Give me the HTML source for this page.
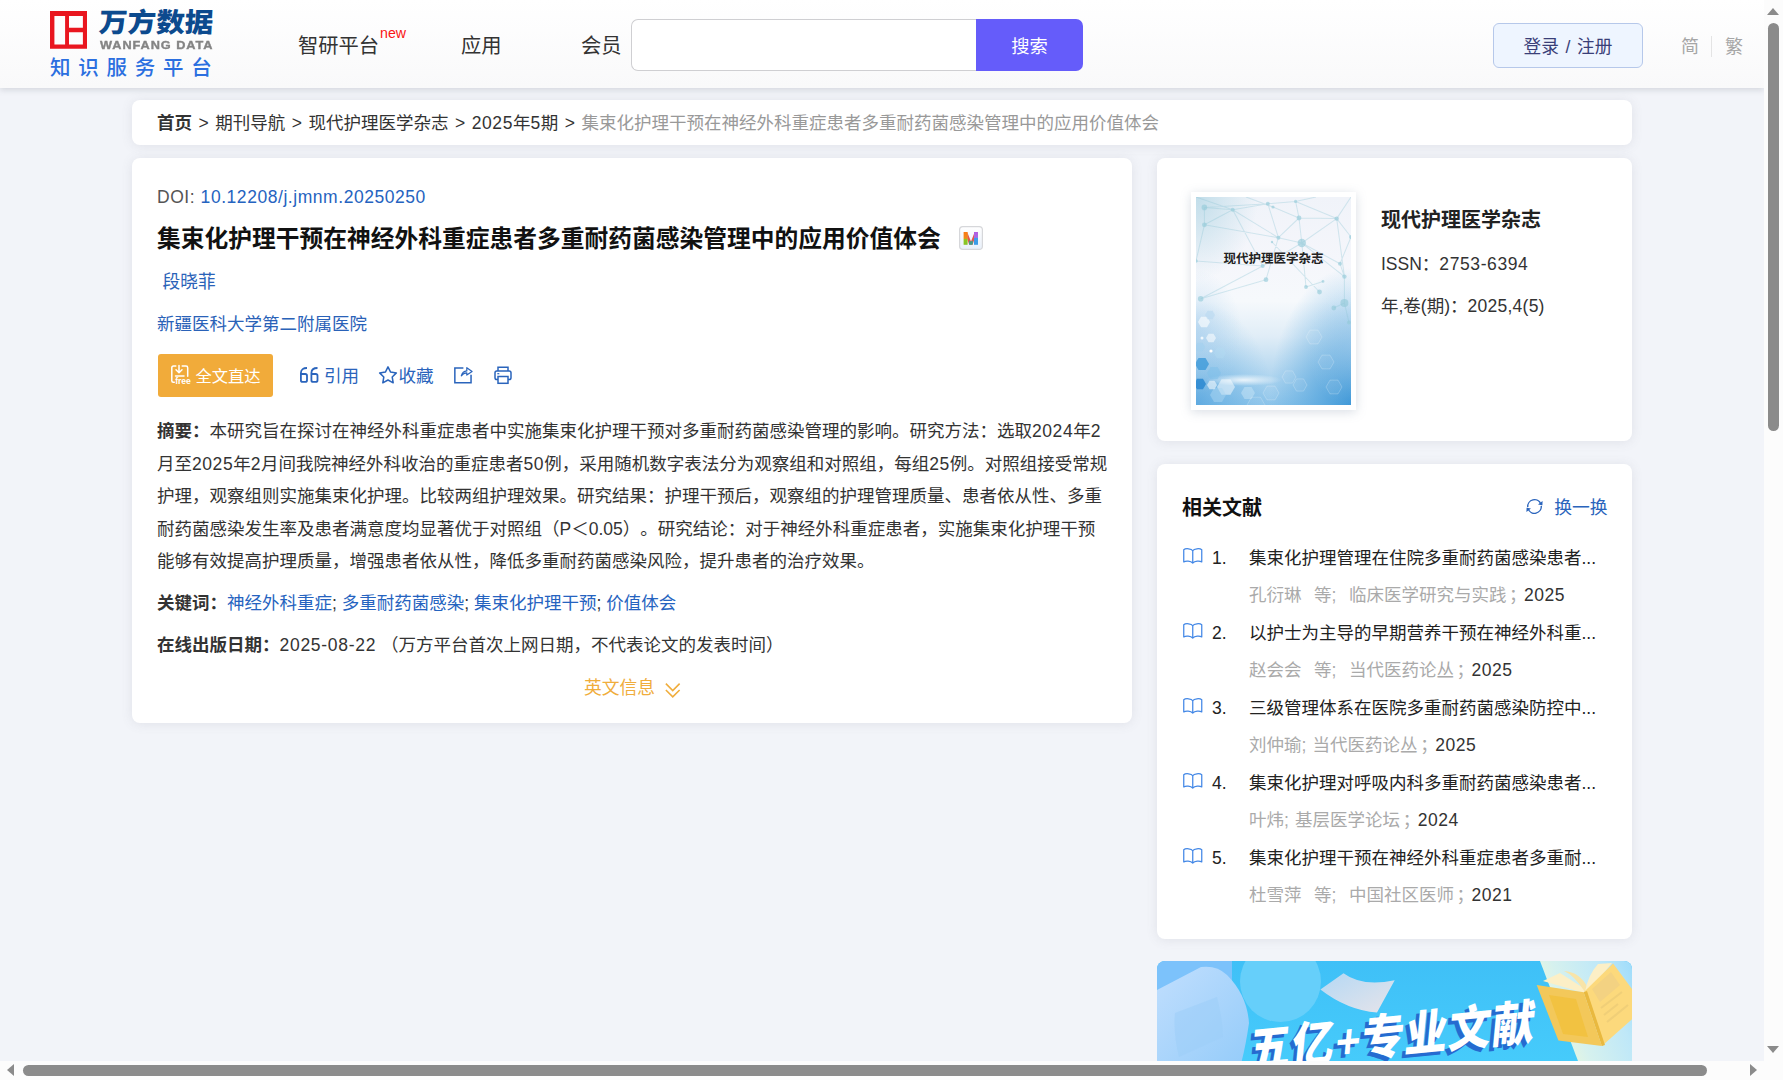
<!DOCTYPE html>
<html lang="zh-CN">
<head>
<meta charset="utf-8">
<title>集束化护理干预在神经外科重症患者多重耐药菌感染管理中的应用价值体会</title>
<style>
*{box-sizing:border-box;margin:0;padding:0}
html,body{width:1783px;height:1080px;overflow:hidden}
body{position:relative;background:#f2f4f9;font-family:"Liberation Sans","Noto Sans CJK SC",sans-serif;color:#2b2b2b;font-size:17.5px;text-spacing-trim:space-all}
.abs{position:absolute;white-space:nowrap}
a{text-decoration:none;color:inherit}
/* header */
#hdr{position:absolute;left:0;top:0;width:1764px;height:88px;background:linear-gradient(#ffffff,#f9f9fa);box-shadow:0 2px 6px rgba(90,95,112,.2)}
.nav{position:absolute;top:31.700px;font-size:20.3px;line-height:28px;color:#333;white-space:nowrap}
#sbox{position:absolute;left:631px;top:19px;width:346px;height:52px;background:#fff;border:1px solid #cfcfd2;border-right:none;border-radius:7px 0 0 7px}
#sbtn{position:absolute;left:976px;top:19px;width:107px;height:52px;background:#655cfa;border-radius:0 7px 7px 0;color:#fff;font-size:18.3px;line-height:55px;text-align:center}
#login{position:absolute;left:1493px;top:23px;width:150px;height:45px;background:#eef5ff;border:1px solid #b6c8ea;border-radius:6px;color:#3a3f78;font-size:17.7px;line-height:47px;text-align:center;white-space:nowrap;word-spacing:1.7px}
.lang{position:absolute;top:33.700px;font-size:18px;line-height:26px;color:#a6a6a6}
/* cards */
.card{position:absolute;background:#fff;border-radius:8px;box-shadow:0 1px 12px rgba(95,100,118,.12)}
#crumb{left:132px;top:100px;width:1500px;height:45px}
#main{left:132px;top:158px;width:1000px;height:565px}
#jcard{left:1157px;top:158px;width:475px;height:283px}
#rcard{left:1157px;top:464px;width:475px;height:475px}
.blue{color:#2563c0}
.ra{word-spacing:1.4px}
.ln{position:absolute;left:157px;white-space:nowrap;font-size:17.5px;line-height:32px;color:#333}
b,.b{font-weight:700}
.n{font-style:normal;letter-spacing:.57px}
/* scrollbars */
#vsb{position:absolute;left:1764px;top:0;width:19px;height:1061px;background:#fcfcfc}
#hsb{position:absolute;left:0;top:1061px;width:1783px;height:19px;background:#fcfcfc}
.thumb{position:absolute;background:#8b8b8b;border-radius:6px}
.tri{position:absolute;width:0;height:0;border-style:solid}
</style>
</head>
<body>

<!-- breadcrumb -->
<div class="card" id="crumb"></div>
<div class="abs" id="crumbtxt" style="left:157px;top:109px;font-size:17.5px;line-height:28px;color:#333;word-spacing:1.65px"><b>首页</b> &gt; 期刊导航 &gt; 现代护理医学杂志 &gt; <i class="n">2025</i>年<i class="n">5</i>期 &gt; <span id="crl" style="color:#999">集束化护理干预在神经外科重症患者多重耐药菌感染管理中的应用价值体会</span></div>

<!-- main card -->
<div class="card" id="main"></div>
<div class="abs" id="doi" style="left:157px;top:183px;font-size:17.5px;line-height:28px;color:#555;letter-spacing:.55px">DOI: <span class="blue">10.12208/j.jmnm.20250250</span></div>
<div class="abs b" id="title" style="left:157px;top:220.800px;font-size:23.75px;line-height:36px;color:#111">集束化护理干预在神经外科重症患者多重耐药菌感染管理中的应用价值体会</div>
<svg id="micon" style="position:absolute;left:959px;top:226px" width="24" height="24" viewBox="0 0 24 24">
  <defs><linearGradient id="mg0" x1="0" y1="0" x2="0" y2="1"><stop offset="0" stop-color="#fff"/><stop offset="1" stop-color="#e9f0fa"/></linearGradient>
  <linearGradient id="mg1" x1="0" y1="0" x2="0" y2="1"><stop offset="0" stop-color="#fa7a12"/><stop offset=".5" stop-color="#f08a1a"/><stop offset=".56" stop-color="#8cc820"/><stop offset="1" stop-color="#86c226"/></linearGradient>
  <linearGradient id="mg2" x1="0" y1="0" x2="0" y2="1"><stop offset="0" stop-color="#b45be0"/><stop offset=".42" stop-color="#a46be6"/><stop offset=".5" stop-color="#3e9ae8"/><stop offset="1" stop-color="#3a9be6"/></linearGradient></defs>
  <rect x=".6" y=".6" width="22.800" height="22.800" rx="3.200" fill="url(#mg0)" stroke="#d6d7da" stroke-width="1.200"/>
  <path d="M8.200 6L12 15.500L15.500 6.500L15.500 13L13.600 18.700H10.200L8.200 13z" fill="#e2574c"/>
  <path d="M10 14.500L12 15.500L14 14.500L13.600 18.700H10.200z" fill="#3f9e8c"/>
  <rect x="4.600" y="6" width="4" height="12.800" fill="url(#mg1)"/>
  <rect x="15" y="6" width="4" height="12.800" fill="url(#mg2)"/>
</svg>
<div class="abs" id="author" style="left:162.500px;top:267.800px;font-size:17.7px;line-height:28px;color:#2a62b8">段晓菲</div>
<div class="abs" id="affil" style="left:157px;top:309.700px;font-size:17.5px;line-height:28px;color:#2a62b8">新疆医科大学第二附属医院</div>

<div id="fbtn" style="position:absolute;left:158px;top:354px;width:115px;height:43px;background:#f1ab3a;border-radius:3px"></div>
<svg style="position:absolute;left:169px;top:363px" width="24" height="24" viewBox="0 0 24 24" fill="none" stroke="#fff" stroke-width="1.5" stroke-linecap="round" stroke-linejoin="round">
  <path d="M6.800 3H4.500Q2.800 3 2.800 4.700V17.800Q2.800 19.300 4.300 19.300H5.300"/><path d="M13.200 3H17Q18.700 3 18.700 4.700V13.200"/><path d="M10 2.400V9.600M7 6.800L10 9.800L13 6.800"/><path d="M6.500 13H15"/>
  <text x="6.300" y="20.800" font-family="Liberation Sans,sans-serif" font-size="8.600" font-weight="700" fill="#fff" stroke="none" letter-spacing="-.1">free</text>
</svg>
<div class="abs" id="fbtxt" style="left:195.500px;top:361.800px;font-size:16.3px;line-height:28px;color:#fff">全文直达</div>

<svg id="cite66" style="position:absolute;left:299px;top:366px" width="21" height="18" viewBox="0 0 21 18" fill="none" stroke="#2a64bc" stroke-width="1.800"><path d="M8 2C4.500 2 1.900 3.300 1.900 7V14.200Q1.900 15.900 3.600 15.900H6.300Q8 15.900 8 14.200V9.700Q8 8 6.300 8H1.900"/><path d="M18.500 2C15 2 12.400 3.300 12.400 7V14.200Q12.400 15.900 14.100 15.900H16.800Q18.500 15.900 18.500 14.200V9.700Q18.500 8 16.800 8H12.400"/></svg>
<div class="abs" id="cite" style="left:324px;top:361.800px;font-size:17.6px;line-height:28px;color:#2a64bc">引用</div>
<svg style="position:absolute;left:378.300px;top:365.400px" width="20" height="20" viewBox="0 0 20 20" fill="none" stroke="#2a64bc" stroke-width="1.5" stroke-linejoin="round"><path d="M10 1.800l2.600 5.300 5.800.8-4.200 4.100 1 5.800-5.200-2.800-5.200 2.800 1-5.800L1.600 7.900l5.800-.8z"/></svg>
<div class="abs" id="fav" style="left:398.500px;top:362px;font-size:17.6px;line-height:28px;color:#2a64bc">收藏</div>
<svg style="position:absolute;left:453px;top:364px" width="21" height="21" viewBox="0 0 21 21" fill="none" stroke="#2a64bc" stroke-width="1.500"><path d="M10.400 3.950H1.850V18.850H18.050V10.800"/><path d="M8.300 11.800c.8-3 2.700-4.700 5.500-4.900V3.700l5.300 3.700-5.300 3.700V8.800c-2.300.1-4.100 1-5.500 3z" stroke-width="1.200" stroke-linejoin="round"/></svg>
<svg style="position:absolute;left:493px;top:365px" width="20" height="20" viewBox="0 0 20 20" fill="none" stroke="#2a64bc" stroke-width="1.500"><path d="M5 6V2.200h10V6"/><rect x="2" y="6" width="16" height="8.600" rx="1.800"/><rect x="5" y="11.500" width="10" height="6.800" fill="#fff"/><path d="M4.300 8.700h2" stroke-width="1.200"/></svg>

<div class="ln" id="l1" style="top:415px"><b>摘要：</b>本研究旨在探讨在神经外科重症患者中实施集束化护理干预对多重耐药菌感染管理的影响。研究方法：选取<i class="n">2024</i>年<i class="n">2</i></div>
<div class="ln" id="l2" style="top:447.500px">月至<i class="n">2025</i>年<i class="n">2</i>月间我院神经外科收治的重症患者<i class="n">50</i>例，采用随机数字表法分为观察组和对照组，每组<i class="n">25</i>例。对照组接受常规</div>
<div class="ln" id="l3" style="top:480px">护理，观察组则实施集束化护理。比较两组护理效果。研究结果：护理干预后，观察组的护理管理质量、患者依从性、多重</div>
<div class="ln" id="l4" style="top:512.500px">耐药菌感染发生率及患者满意度均显著优于对照组（P＜0.05）。研究结论：对于神经外科重症患者，实施集束化护理干预</div>
<div class="ln" id="l5" style="top:545px">能够有效提高护理质量，增强患者依从性，降低多重耐药菌感染风险，提升患者的治疗效果。</div>
<div class="ln" id="kw" style="top:586.500px"><b>关键词：</b><span class="blue">神经外科重症</span>; <span class="blue">多重耐药菌感染</span>; <span class="blue">集束化护理干预</span>; <span class="blue">价值体会</span></div>
<div class="ln" id="dt" style="top:628.700px"><b>在线出版日期：</b><i class="n" style="letter-spacing:.72px">2025-08-22</i> （万方平台首次上网日期，不代表论文的发表时间）</div>
<div class="abs" id="eng" style="left:584px;top:674px;font-size:17.8px;line-height:28px;color:#f0ad3c">英文信息</div>
<svg style="position:absolute;left:663.500px;top:680.500px" width="17.500" height="18" viewBox="0 0 16 17" fill="none" stroke="#f0ad3c" stroke-width="1.5"><path d="M1.500 2.500L8 9l6.500-6.500"/><path d="M1.500 8.500L8 15l6.500-6.500"/></svg>

<!-- journal card -->
<div class="card" id="jcard"></div>
<div style="position:absolute;left:1191px;top:192px;width:165px;height:218px;background:#fff;box-shadow:0 2px 10px rgba(120,135,160,.28)"></div>
<svg id="cover" style="position:absolute;left:1196px;top:197px" width="155" height="208" viewBox="0 0 155 208">
<defs>
<linearGradient id="cg1" x1="0" y1="0" x2="0" y2="1"><stop offset="0" stop-color="#f0f3f9"/><stop offset=".3" stop-color="#f5f6fb"/><stop offset=".5" stop-color="#f6f9fc"/><stop offset=".67" stop-color="#e0edf7"/><stop offset=".84" stop-color="#b6d8f0"/><stop offset="1" stop-color="#8cc4ea"/></linearGradient>
<radialGradient id="cg3" cx="1" cy="1" r=".66" gradientTransform="translate(1 1) scale(.8 1) translate(-1 -1)"><stop offset="0" stop-color="#3a95d6" stop-opacity=".95"/><stop offset=".45" stop-color="#4fa2dc" stop-opacity=".6"/><stop offset="1" stop-color="#5aaae0" stop-opacity="0"/></radialGradient>
<radialGradient id="cg4" cx="0" cy="1" r=".5"><stop offset="0" stop-color="#4c9fdc" stop-opacity=".7"/><stop offset="1" stop-color="#6ab4e4" stop-opacity="0"/></radialGradient>
<radialGradient id="cg6" cx="0" cy="0" r=".4"><stop offset="0" stop-color="#b5d8e6" stop-opacity=".8"/><stop offset="1" stop-color="#b5d8e6" stop-opacity="0"/></radialGradient>
<filter id="cbl" x="-5%" y="-5%" width="110%" height="110%"><feGaussianBlur stdDeviation=".35"/></filter>
<radialGradient id="cg9" cx=".5" cy=".5" r=".5"><stop offset="0" stop-color="#a9cfee" stop-opacity=".6"/><stop offset="1" stop-color="#b4d6ef" stop-opacity="0"/></radialGradient>
<radialGradient id="cg5" cx=".5" cy=".5" r=".5"><stop offset="0" stop-color="#fff" stop-opacity="1"/><stop offset="1" stop-color="#fff" stop-opacity="0"/></radialGradient>
</defs>
<rect width="155" height="208" fill="url(#cg1)"/>
<rect width="155" height="208" fill="url(#cg3)"/>
<rect width="155" height="208" fill="url(#cg4)"/>
<rect width="155" height="208" fill="url(#cg6)"/>
<ellipse cx="0" cy="135" rx="46" ry="62" fill="url(#cg9)"/><ellipse cx="155" cy="150" rx="44" ry="60" fill="url(#cg9)" opacity=".6"/>
<ellipse cx="48" cy="183" rx="38" ry="6" fill="url(#cg5)" opacity=".8"/>
<path d="M8.4 10.4L36.7 12.7M36.7 12.7L71.8 6.7M36.7 12.7L82.4 40.7M8.4 27.8L36.7 12.7M8.4 27.8L82.4 40.7M71.8 6.7L82.4 40.7M77 10L103 21M103 21L82.4 40.7M103 21L140.7 21.6M99.6 4.4L103 21M105.8 46L140.7 21.6M82.4 40.7L105.8 46M4.7 101.8L66.7 69M66.7 69L105.8 46M36.7 12.7L66.7 69M105.8 46L110 90M110 90L127 84.4M140.7 21.6L148.4 79.6M8.4 10.4L8.4 27.8M8.4 10.4L71.8 6.7M77 10L50 0M99.6 4.4L120 0M140.7 21.6L155 0M140.7 21.6L155 40M155 40L144 66.7M144 66.7L148.4 79.6M148.4 79.6L148.4 106M148.4 106L137.8 111M105.8 46L148.4 79.6M0 64L66.7 69M0 64L8.4 27.8M70 82.7L82.4 40.7M105.8 46L144 66.7M103 21L105.8 46M123.5 95L76 45M36.7 12.7L0 0M71.8 6.7L99.6 4.4M99.6 4.4L140.7 21.6M148.4 106L153 125.6M4.7 101.8L70 82.7" stroke="#8cc3d2" stroke-opacity=".34" stroke-width="1.05" filter="url(#cbl)" fill="none"/>
<circle cx="8.4" cy="10.4" r="2.8" fill="#93cad8" fill-opacity=".62"/>
<circle cx="8.4" cy="27.8" r="2.4" fill="#93cad8" fill-opacity=".62"/>
<circle cx="36.7" cy="12.7" r="2" fill="#93cad8" fill-opacity=".62"/>
<circle cx="71.8" cy="6.7" r="2" fill="#93cad8" fill-opacity=".62"/>
<circle cx="77" cy="10" r="1.6" fill="#93cad8" fill-opacity=".62"/>
<circle cx="99.6" cy="4.4" r="1.6" fill="#93cad8" fill-opacity=".62"/>
<circle cx="103" cy="21" r="2.4" fill="#93cad8" fill-opacity=".62"/>
<circle cx="140.7" cy="21.6" r="2.2" fill="#93cad8" fill-opacity=".62"/>
<circle cx="82.4" cy="40.7" r="2" fill="#93cad8" fill-opacity=".62"/>
<circle cx="105.8" cy="46" r="4.2" fill="#93cad8" fill-opacity=".62"/>
<circle cx="76" cy="45" r="1.2" fill="#93cad8" fill-opacity=".62"/>
<circle cx="70" cy="82.7" r="2.4" fill="#93cad8" fill-opacity=".62"/>
<circle cx="66.7" cy="69" r="2" fill="#93cad8" fill-opacity=".62"/>
<circle cx="110" cy="90" r="1.9" fill="#93cad8" fill-opacity=".62"/>
<circle cx="123.5" cy="95" r="2.4" fill="#93cad8" fill-opacity=".62"/>
<circle cx="127" cy="84.4" r="1.4" fill="#93cad8" fill-opacity=".62"/>
<circle cx="148.4" cy="79.6" r="2.2" fill="#93cad8" fill-opacity=".62"/>
<circle cx="148.4" cy="106" r="4" fill="#93cad8" fill-opacity=".62"/>
<circle cx="137.8" cy="111" r="2.4" fill="#93cad8" fill-opacity=".62"/>
<circle cx="4.7" cy="101.8" r="2.8" fill="#93cad8" fill-opacity=".62"/>
<circle cx="153" cy="125.6" r="2" fill="#93cad8" fill-opacity=".62"/>
<circle cx="144" cy="66.7" r="2" fill="#93cad8" fill-opacity=".62"/>
<circle cx="0" cy="64" r="1.8" fill="#93cad8" fill-opacity=".62"/>
<circle cx="155" cy="40" r="2" fill="#93cad8" fill-opacity=".62"/>
<polygon points="13.0,167.0 9.5,173.1 2.5,173.1 -1.0,167.0 2.5,160.9 9.5,160.9" fill="#3d9ad9" fill-opacity="0.8"/>
<polygon points="10.0,187.0 7.0,192.2 1.0,192.2 -2.0,187.0 1.0,181.8 7.0,181.8" fill="#2f8bd2" fill-opacity="0.9"/>
<polygon points="25.0,176.0 21.5,182.1 14.5,182.1 11.0,176.0 14.5,169.9 21.5,169.9" fill="#7ec0ea" fill-opacity="0.5"/>
<polygon points="14.0,125.0 11.0,130.2 5.0,130.2 2.0,125.0 5.0,119.8 11.0,119.8" fill="#fff" fill-opacity="0.6"/>
<polygon points="19.0,118.0 16.5,122.3 11.5,122.3 9.0,118.0 11.5,113.7 16.5,113.7" fill="#b9d9f0" fill-opacity="0.6"/>
<polygon points="39.0,190.0 34.5,197.8 25.5,197.8 21.0,190.0 25.5,182.2 34.5,182.2" fill="#fff" fill-opacity="0.5"/>
<polygon points="30.0,198.0 26.0,204.9 18.0,204.9 14.0,198.0 18.0,191.1 26.0,191.1" fill="#a9d5f2" fill-opacity="0.5"/>
<polygon points="20.0,141.0 17.5,145.3 12.5,145.3 10.0,141.0 12.5,136.7 17.5,136.7" fill="#fff" fill-opacity="0.55"/>
<polygon points="9.0,150.0 6.5,154.3 1.5,154.3 -1.0,150.0 1.5,145.7 6.5,145.7" fill="#9fd0ef" fill-opacity="0.5"/>
<polygon points="30.0,156.0 27.0,161.2 21.0,161.2 18.0,156.0 21.0,150.8 27.0,150.8" fill="#b5dbf3" fill-opacity="0.4"/>
<polygon points="59.0,196.0 55.5,202.1 48.5,202.1 45.0,196.0 48.5,189.9 55.5,189.9" fill="#cfe8f8" fill-opacity="0.45"/>
<polygon points="21.0,188.0 18.5,192.3 13.5,192.3 11.0,188.0 13.5,183.7 18.5,183.7" fill="#fff" fill-opacity="0.55"/>
<polygon points="83.0,196.0 79.0,202.9 71.0,202.9 67.0,196.0 71.0,189.1 79.0,189.1" fill="#fff" fill-opacity=".06" stroke="#ffffff" stroke-opacity=".3" stroke-width=".7"/>
<polygon points="100.0,180.0 96.5,186.1 89.5,186.1 86.0,180.0 89.5,173.9 96.5,173.9" fill="#fff" fill-opacity=".06" stroke="#ffffff" stroke-opacity=".3" stroke-width=".7"/>
<polygon points="111.0,188.0 107.5,194.1 100.5,194.1 97.0,188.0 100.5,181.9 107.5,181.9" fill="#fff" fill-opacity=".06" stroke="#ffffff" stroke-opacity=".3" stroke-width=".7"/>
<polygon points="138.0,165.0 134.0,171.9 126.0,171.9 122.0,165.0 126.0,158.1 134.0,158.1" fill="#fff" fill-opacity=".06" stroke="#ffffff" stroke-opacity=".3" stroke-width=".7"/>
<polygon points="146.0,190.0 142.0,196.9 134.0,196.9 130.0,190.0 134.0,183.1 142.0,183.1" fill="#fff" fill-opacity=".06" stroke="#ffffff" stroke-opacity=".3" stroke-width=".7"/>
<polygon points="69.0,208.0 64.5,215.8 55.5,215.8 51.0,208.0 55.5,200.2 64.5,200.2" fill="#fff" fill-opacity=".06" stroke="#ffffff" stroke-opacity=".3" stroke-width=".7"/>
<polygon points="126.0,140.0 122.0,146.9 114.0,146.9 110.0,140.0 114.0,133.1 122.0,133.1" fill="#fff" fill-opacity=".06" stroke="#ffffff" stroke-opacity=".3" stroke-width=".7"/>
<circle cx="15" cy="154" r="1.6" fill="#fff"/><circle cx="6" cy="141" r="1.5" fill="#fff" opacity=".8"/>
<text x="77.500" y="65.500" text-anchor="middle" font-family="Liberation Sans,Noto Sans CJK SC,sans-serif" font-weight="700" font-size="12.500" fill="#222">现代护理医学杂志</text>
</svg>
<div class="abs b" id="jname" style="left:1381px;top:204.400px;font-size:20px;line-height:32px;color:#222">现代护理医学杂志</div>
<div class="abs" id="issn" style="left:1381px;top:249.500px;font-size:17.5px;line-height:28px;color:#333">ISSN：<i class="n" style="letter-spacing:.6px">2753-6394</i></div>
<div class="abs" id="yvi" style="left:1381px;top:291.800px;font-size:17.5px;line-height:28px;color:#333">年,卷(期)：<i class="n" style="letter-spacing:.25px">2025,4(5)</i></div>

<!-- related card -->
<div class="card" id="rcard"></div>
<div class="abs b" id="rtitle" style="left:1182px;top:492px;font-size:20px;line-height:32px;color:#111">相关文献</div>
<svg style="position:absolute;left:1524.800px;top:496.800px" width="19" height="19" viewBox="0 0 19 19" fill="none" stroke="#2a64bc" stroke-width="1.400"><g><path d="M2.73 10.09A6.8 6.8 0 0 1 15.80 6.95"/><path d="M17.60 3.90L17.40 8.30L13.00 7.60z" fill="#2a64bc" stroke="none"/></g><g transform="rotate(180 9.5 9.5)"><path d="M2.73 10.09A6.8 6.8 0 0 1 15.80 6.95"/><path d="M17.60 3.90L17.40 8.30L13.00 7.60z" fill="#2a64bc" stroke="none"/></g></svg>
<div class="abs" id="swap" style="left:1554.200px;top:494.200px;font-size:17.8px;line-height:28px;color:#2a64bc">换一换</div>
<svg class="bk" style="position:absolute;left:1181.700px;top:547px" width="21.500" height="18" viewBox="0 0 21 18" fill="none" stroke="#4287e6" stroke-width="1.250" stroke-linejoin="round"><path d="M10.500 3.700C9.300 1.600 3.500 1 1.500 2.700V14.900C3.500 13.500 8.500 13.700 10.500 16.100C12.500 13.700 17.500 13.500 19.500 14.900V2.700C17.500 1 11.700 1.600 10.500 3.700zM10.500 3.700V16"/></svg>
<div class="abs rn" style="left:1212px;top:543.7px;font-size:17.5px;line-height:28px;color:#222">1.</div>
<div class="abs rt" style="left:1249px;top:543.7px;font-size:17.5px;line-height:28px;color:#222">集束化护理管理在住院多重耐药菌感染患者...</div>
<div class="abs ra" style="left:1249px;top:580.5px;font-size:17.5px;line-height:28px;color:#aaa">孔衍琳&nbsp; 等;&nbsp; 临床医学研究与实践<span style="position:relative;left:2.500px">；</span><span class="n" style="color:#333">2025</span></div>
<svg class="bk" style="position:absolute;left:1181.700px;top:622px" width="21.500" height="18" viewBox="0 0 21 18" fill="none" stroke="#4287e6" stroke-width="1.250" stroke-linejoin="round"><path d="M10.500 3.700C9.300 1.600 3.500 1 1.500 2.700V14.900C3.500 13.500 8.500 13.700 10.500 16.100C12.500 13.700 17.500 13.500 19.500 14.900V2.700C17.500 1 11.700 1.600 10.500 3.700zM10.500 3.700V16"/></svg>
<div class="abs rn" style="left:1212px;top:618.7px;font-size:17.5px;line-height:28px;color:#222">2.</div>
<div class="abs rt" style="left:1249px;top:618.7px;font-size:17.5px;line-height:28px;color:#222">以护士为主导的早期营养干预在神经外科重...</div>
<div class="abs ra" style="left:1249px;top:655.5px;font-size:17.5px;line-height:28px;color:#aaa">赵会会&nbsp; 等;&nbsp; 当代医药论丛<span style="position:relative;left:2.500px">；</span><span class="n" style="color:#333">2025</span></div>
<svg class="bk" style="position:absolute;left:1181.700px;top:697px" width="21.500" height="18" viewBox="0 0 21 18" fill="none" stroke="#4287e6" stroke-width="1.250" stroke-linejoin="round"><path d="M10.500 3.700C9.300 1.600 3.500 1 1.500 2.700V14.900C3.500 13.500 8.500 13.700 10.500 16.100C12.500 13.700 17.500 13.500 19.500 14.900V2.700C17.500 1 11.700 1.600 10.500 3.700zM10.500 3.700V16"/></svg>
<div class="abs rn" style="left:1212px;top:693.7px;font-size:17.5px;line-height:28px;color:#222">3.</div>
<div class="abs rt" style="left:1249px;top:693.7px;font-size:17.5px;line-height:28px;color:#222">三级管理体系在医院多重耐药菌感染防控中...</div>
<div class="abs ra" style="left:1249px;top:730.5px;font-size:17.5px;line-height:28px;color:#aaa">刘仲瑜; 当代医药论丛<span style="position:relative;left:2.500px">；</span><span class="n" style="color:#333">2025</span></div>
<svg class="bk" style="position:absolute;left:1181.700px;top:772px" width="21.500" height="18" viewBox="0 0 21 18" fill="none" stroke="#4287e6" stroke-width="1.250" stroke-linejoin="round"><path d="M10.500 3.700C9.300 1.600 3.500 1 1.500 2.700V14.900C3.500 13.500 8.500 13.700 10.500 16.100C12.500 13.700 17.500 13.500 19.500 14.900V2.700C17.500 1 11.700 1.600 10.500 3.700zM10.500 3.700V16"/></svg>
<div class="abs rn" style="left:1212px;top:768.7px;font-size:17.5px;line-height:28px;color:#222">4.</div>
<div class="abs rt" style="left:1249px;top:768.7px;font-size:17.5px;line-height:28px;color:#222">集束化护理对呼吸内科多重耐药菌感染患者...</div>
<div class="abs ra" style="left:1249px;top:805.5px;font-size:17.5px;line-height:28px;color:#aaa">叶炜; 基层医学论坛<span style="position:relative;left:2.500px">；</span><span class="n" style="color:#333">2024</span></div>
<svg class="bk" style="position:absolute;left:1181.700px;top:847px" width="21.500" height="18" viewBox="0 0 21 18" fill="none" stroke="#4287e6" stroke-width="1.250" stroke-linejoin="round"><path d="M10.500 3.700C9.300 1.600 3.500 1 1.500 2.700V14.900C3.500 13.500 8.500 13.700 10.500 16.100C12.500 13.700 17.500 13.500 19.500 14.900V2.700C17.500 1 11.700 1.600 10.500 3.700zM10.500 3.700V16"/></svg>
<div class="abs rn" style="left:1212px;top:843.7px;font-size:17.5px;line-height:28px;color:#222">5.</div>
<div class="abs rt" style="left:1249px;top:843.7px;font-size:17.5px;line-height:28px;color:#222">集束化护理干预在神经外科重症患者多重耐...</div>
<div class="abs ra" style="left:1249px;top:880.5px;font-size:17.5px;line-height:28px;color:#aaa">杜雪萍&nbsp; 等;&nbsp; 中国社区医师<span style="position:relative;left:2.500px">；</span><span class="n" style="color:#333">2021</span></div>

<svg id="banner" style="position:absolute;left:1157px;top:961px" width="475" height="100" viewBox="0 0 475 100">
<defs>
<clipPath id="bclip"><path d="M0 100V8a8 8 0 0 1 8-8H467a8 8 0 0 1 8 8V100z"/></clipPath>
<linearGradient id="bg0" x1="0" y1="0" x2="0" y2="1"><stop offset="0" stop-color="#3fc0f7"/><stop offset="1" stop-color="#46cbfb"/></linearGradient>
<linearGradient id="bgR" x1="0" y1=".6" x2="1" y2=".2"><stop offset="0" stop-color="#f3fad6"/><stop offset=".3" stop-color="#d6f1ee"/><stop offset=".7" stop-color="#bfe8f8"/><stop offset="1" stop-color="#9fdcfb"/></linearGradient>
<linearGradient id="bgL" x1="0" y1="0" x2="1" y2="1"><stop offset="0" stop-color="#c2dffe"/><stop offset="1" stop-color="#93cbf9"/></linearGradient>
<linearGradient id="bgP" x1="0" y1="0" x2="1" y2="1"><stop offset="0" stop-color="#b4d8f4"/><stop offset="1" stop-color="#e6e4ea"/></linearGradient>
</defs>
<g clip-path="url(#bclip)">
<rect width="475" height="100" fill="url(#bg0)"/>
<rect width="75" height="100" fill="#7cc2fb"/>
<circle cx="123.500" cy="20.500" r="40.500" fill="#66cffa"/>
<path d="M-6 32L44 6Q60 4 70 14Q90 34 92 62Q88 90 82 110L-6 110z" fill="url(#bgL)"/>
<path d="M18 52L60 36Q66 60 66 76L22 96Q16 72 18 52z" fill="#9ccdf8" opacity=".55"/>
<path d="M163.400 28.400L186.500 12.200Q205 26 237.700 19.200L220 51.500Q190 49 163.400 28.400z" fill="url(#bgP)"/>
<polygon points="383.0,0.0 483.0,0.0 483.0,100.0 421.0,100.0" fill="url(#bgR)"/>
<!-- book -->
<path d="M386.0,20.0L403.0,12.0L428.0,28.0L427.0,32.0z" fill="#fcefc6"/>
<path d="M428 31Q417 14 407 10Q423 11 431 27z" fill="#f8e4a8"/>
<path d="M428 31Q431 14 441 3L455 2L433 29z" fill="#fcefc6"/>
<polygon points="379.7,24.1 426.7,31.2 444.9,85.1 401.4,79.5" fill="#f3c85a"/>
<polygon points="392.0,34.0 419.0,38.0 431.0,76.0 406.0,73.0" fill="#f2c241"/>
<polygon points="426.7,31.2 456.1,2.4 483.0,39.0 483.0,51.0 444.9,85.1" fill="#fcd97c"/>
<polygon points="435.0,28.0 454.0,11.0 463.0,24.0 443.0,41.0" fill="#f3d282"/>
<path d="M444 47L465 31M447 54L461 43M450 61L471 44" stroke="#f0cf78" stroke-width="2.200" fill="none"/>
<polygon points="426.7,31.2 430.0,30.0 448.0,84.0 444.9,85.1" fill="#e9b93f"/>
<!-- text -->
<g transform="translate(90,106.500) rotate(-5.600) skewX(-11) scale(1,1.13)">
<text x="-3.500" y="3" font-family="Liberation Sans,Noto Sans CJK SC,sans-serif" font-weight="900" font-size="42.500" fill="#256bd0" letter-spacing="1.300">五亿+专业文献</text>
<text x="0" y="0" font-family="Liberation Sans,Noto Sans CJK SC,sans-serif" font-weight="900" font-size="42.500" fill="#fff" letter-spacing="1.300">五亿+专业文献</text>
</g>
</g>
</svg>
<!-- header -->
<div id="hdr">
  <!-- logo -->
  <svg style="position:absolute;left:50px;top:11px" width="37" height="38" viewBox="0 0 37 38"><path fill="#e9161f" fill-rule="evenodd" d="M0 .1H37V37.800H0zM4.400 4.950H15.100V33.400H4.400zM19 4.950H32.900V16.800H19zM19 21.200H32.900V33.400H19z"/></svg>
  <div class="abs" id="lg1" style="left:97.500px;top:5.300px;font-family:'Liberation Sans','Noto Sans CJK SC',sans-serif;font-weight:900;font-size:27px;line-height:36px;color:#0c4a8e;transform-origin:0 100%;transform:scaleX(1.06) skewX(-3deg)">万方数据</div>
  <div class="abs" id="lg2" style="left:99.500px;top:38px;font-weight:700;font-size:10.6px;line-height:14px;color:#848484;letter-spacing:.8px;transform-origin:0 50%;transform:scaleX(1.2);-webkit-text-stroke:.35px #848484">WANFANG DATA</div>
  <div class="abs" id="lg3" style="left:50px;top:53.500px;font-family:'Liberation Sans','Noto Sans CJK SC',sans-serif;font-weight:500;font-size:20.5px;line-height:28px;color:#2b6fe0;letter-spacing:7.75px">知识服务平台</div>
  <!-- nav -->
  <div class="nav" style="left:298px">智研平台</div>
  <div class="abs" id="new" style="left:380px;top:24.500px;font-size:14.2px;line-height:16px;color:#fa1414">new</div>
  <div class="nav" style="left:461px">应用</div>
  <div class="nav" style="left:581px">会员</div>
  <div id="sbox"></div>
  <div id="sbtn">搜索</div>
  <div id="login">登录 / 注册</div>
  <div class="lang" style="left:1681px">简</div>
  <div style="position:absolute;left:1711px;top:36px;width:1px;height:21px;background:#e4e4e4"></div>
  <div class="lang" style="left:1725px">繁</div>
</div>

<!-- scrollbars -->
<div id="vsb">
  <div class="tri" style="left:2.700px;top:8px;border-width:0 6.800px 7px 6.800px;border-color:transparent transparent #8b8b8b transparent"></div>
  <div class="thumb" style="left:4px;top:23px;width:11px;height:408px"></div>
  <div class="tri" style="left:2.700px;top:1046px;border-width:7px 6.800px 0 6.800px;border-color:#8b8b8b transparent transparent transparent"></div>
</div>
<div id="hsb">
  <div class="tri" style="left:7px;top:3px;border-width:6.5px 7px 6.5px 0;border-color:transparent #8b8b8b transparent transparent"></div>
  <div class="thumb" style="left:23px;top:4px;width:1684px;height:11px"></div>
  <div class="tri" style="left:1750px;top:3px;border-width:6.5px 0 6.5px 7px;border-color:transparent transparent transparent #8b8b8b"></div>
</div>
</body>
</html>
